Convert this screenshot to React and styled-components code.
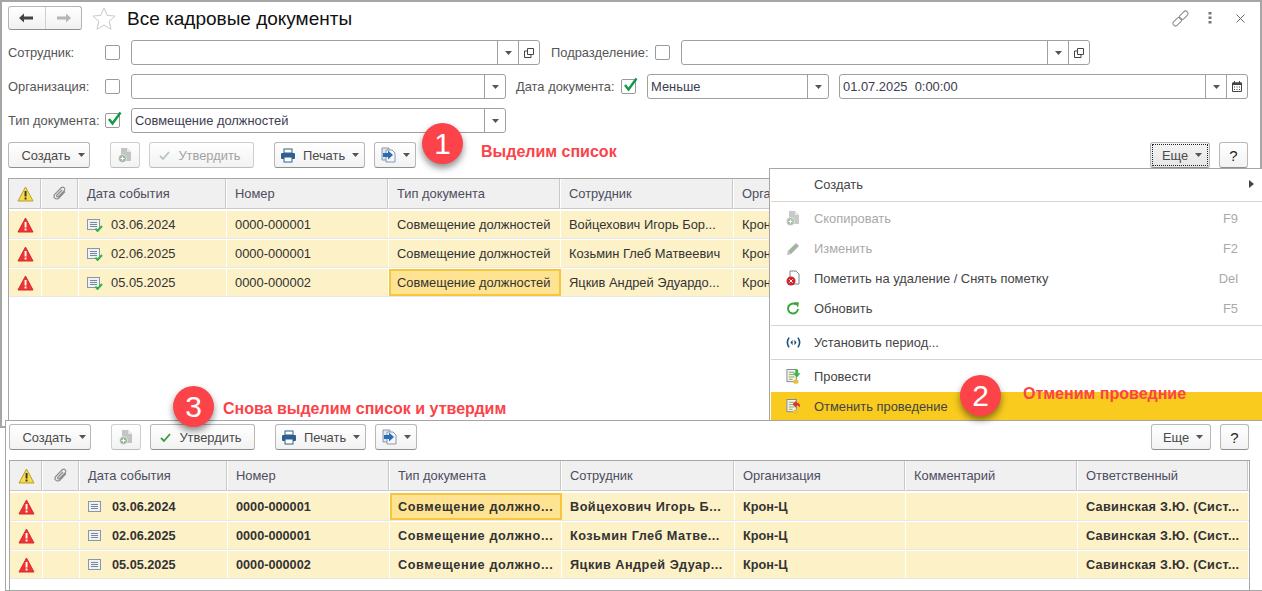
import React from "react";
import styled, { createGlobalStyle } from "styled-components";

const GlobalStyle = createGlobalStyle`
  html, body {
    margin: 0;
    padding: 0;
    background: white;
    font-family: "Liberation Sans", Arial, sans-serif;
    font-size: 12.9px;
    overflow: hidden;
  }
`;

const Page = styled.div`
  position: relative;
  width: 1262px;
  height: 591px;
  overflow: hidden;
  background: white;
`;

const Win = styled.div`
  box-sizing: border-box;
  width: 1262px;
  height: 428px;
  border: 2px solid #a6a6a6;
  padding: 4px 0 0 6px;
  background: white;
`;

const TitleBar = styled.div`
  display: flex;
  align-items: center;
  height: 24px;
  margin-bottom: 10px;
`;

const NavGroup = styled.div`
  display: flex;
  box-sizing: border-box;
  width: 74px;
  height: 24px;
  border: 1px solid #b5b5b5;
  border-bottom-color: #8f8f8f;
  border-radius: 3px;
  background: linear-gradient(#ffffff, #f1f1f1);
`;

const NavBtn = styled.div`
  flex: 1;
  display: flex;
  align-items: center;
  justify-content: center;
  & + & {
    border-left: 1px solid #d0d0d0;
  }
`;

const StarWrap = styled.div`
  display: flex;
  margin: 0 11px 0 10px;
`;

const Title = styled.div`
  padding-top: 1px;
  font-size: 19px;
  color: #111;
`;

const WinTools = styled.div`
  margin-left: auto;
  display: flex;
  align-items: center;
  gap: 19px;
  margin-right: 15px;
`;

const FilterRow = styled.div`
  display: flex;
  align-items: center;
  height: 25px;
  margin-bottom: 9px;
`;

const Label = styled.div`
  width: ${(p) => p.$w}px;
  margin-left: ${(p) => p.$ml || 0}px;
  color: #555;
  white-space: nowrap;
`;

const Check = styled.div`
  position: relative;
  box-sizing: border-box;
  width: 15px;
  height: 15px;
  border: 1px solid #9a9a9a;
  border-radius: 2px;
  margin-right: 11px;
  svg {
    position: absolute;
    left: 0;
    top: -4px;
  }
`;

const Field = styled.div`
  display: flex;
  box-sizing: border-box;
  width: ${(p) => p.$w}px;
  height: 25px;
  margin-left: ${(p) => p.$ml || 0}px;
  border: 1px solid #a0a0a0;
  border-radius: 3px;
  background: white;
`;

const FieldText = styled.div`
  flex: 1;
  padding-left: 3px;
  line-height: 23px;
  color: #3c3c50;
  white-space: pre;
`;

const FieldBtn = styled.div`
  display: flex;
  align-items: center;
  justify-content: center;
  width: 20px;
  border-left: 1px solid #a0a0a0;
`;

const Bar = styled.div`
  display: flex;
  align-items: center;
  height: 26px;
`;

const Btn = styled.div`
  display: flex;
  align-items: center;
  justify-content: center;
  gap: ${(p) => p.$gap || 7}px;
  box-sizing: border-box;
  width: ${(p) => p.$w}px;
  height: 26px;
  margin-left: ${(p) => p.$ml || 0}px;
  padding: 0 ${(p) => p.$pr || 0}px 0 ${(p) => p.$pl || 0}px;
  border: 1px solid ${(p) => (p.$off ? "#cfcfcf" : "#b8b8b8")};
  border-bottom-color: ${(p) => (p.$off ? "#bdbdbd" : "#8f8f8f")};
  border-radius: 3px;
  background: ${(p) =>
    p.$focus ? "linear-gradient(#f4f4f4, #e6e6e6)" : "linear-gradient(#ffffff, #f2f2f2)"};
  color: ${(p) => (p.$off ? "#a3a3a3" : "#4a4a4a")};
  outline: ${(p) => (p.$focus ? "1px dotted #222" : "none")};
  outline-offset: -3px;
`;

const HelpMark = styled.span`
  font-size: 15px;
  color: #222;
`;

const TableBox = styled.div`
  box-sizing: border-box;
  width: ${(p) => p.$w}px;
  height: ${(p) => p.$h}px;
  margin-top: ${(p) => p.$mt}px;
  border: 1px solid #a6a6a6;
  border-bottom: none;
  overflow: hidden;
`;

const COLS = "33px 37px 148px 162px 172px 173px 171px 172px 171px";

const HeadRow = styled.div`
  display: grid;
  grid-template-columns: ${COLS};
  height: 30px;
  margin-bottom: 2px;
`;

const HeadCell = styled.div`
  display: flex;
  align-items: center;
  justify-content: ${(p) => (p.$center ? "center" : "flex-start")};
  padding-left: ${(p) => (p.$center ? 0 : 8)}px;
  background: #f0f0f0;
  border-right: 1px solid white;
  border-bottom: 1px solid #c9c9c9;
  box-shadow: inset -1px 0 0 #c9c9c9;
  color: #4d4d60;
  overflow: hidden;
  white-space: nowrap;
`;

const DataRow = styled.div`
  display: grid;
  grid-template-columns: ${COLS};
  height: 27px;
  border-bottom: 1px solid #e8e8e8;
  margin-bottom: 1px;
`;

const Cell = styled.div`
  display: flex;
  align-items: center;
  box-sizing: border-box;
  gap: 8px;
  justify-content: ${(p) => (p.$center ? "center" : "flex-start")};
  padding-left: ${(p) => (p.$center ? 0 : p.$sel ? 6 : 8)}px;
  background: ${(p) => (p.$sel ? "#fde392" : "#fdf1c7")};
  border: ${(p) => (p.$sel ? "2px solid #f6c63c" : "none")};
  border-right: ${(p) => (p.$sel ? "2px solid #f6c63c" : "1px solid white")};
  color: #333;
  font-size: ${(p) => (p.$bold ? 12.7 : 12.9)}px;
  font-weight: ${(p) => (p.$bold ? 700 : 400)};
  letter-spacing: ${(p) => (p.$bold ? p.$track || 0 : 0)}px;
  white-space: nowrap;
  overflow: hidden;
`;

const Panel = styled.div`
  position: absolute;
  left: 5px;
  top: 420px;
  right: 0;
  height: 171px;
  box-sizing: border-box;
  padding: 3px 0 0 3px;
  background: white;
  border: 1px solid #a6a6a6;
  border-right: 0;
`;

const Menu = styled.div`
  position: absolute;
  left: 769px;
  top: 168px;
  right: 0;
  height: 252px;
  box-sizing: border-box;
  padding-left: 1px;
  background: white;
  border: 1px solid #a6a6a6;
  border-right: 0;
  border-bottom: 0;
`;

const MenuItem = styled.div`
  display: flex;
  align-items: center;
  box-sizing: border-box;
  height: ${(p) => p.$h || 30}px;
  padding: 0 24px ${(p) => (p.$hot ? 0 : 2)}px 15px;
  background: ${(p) => (p.$hot ? "#f9cb1e" : "transparent")};
  color: ${(p) => (p.$off ? "#a9a9a9" : "#444")};
`;

const MenuIcon = styled.div`
  display: flex;
  width: 15px;
  margin-right: 13px;
`;

const Keys = styled.div`
  margin-left: auto;
  color: #a9a9a9;
`;

const SubArrow = styled.div`
  margin-left: auto;
  margin-right: -16px;
  width: 0;
  height: 0;
  border-left: 5px solid #444;
  border-top: 4px solid transparent;
  border-bottom: 4px solid transparent;
`;

const Sep = styled.div`
  height: 1px;
  margin: ${(p) => p.$m || "1px 0 2px"};
  background: #d6d4cb;
`;

const Circle = styled.div`
  position: absolute;
  left: ${(p) => p.$x}px;
  top: ${(p) => p.$y}px;
  display: flex;
  align-items: center;
  justify-content: center;
  width: 41px;
  height: 41px;
  border-radius: 50%;
  background: #fb4349;
  color: white;
  font-size: 30px;
  box-shadow: 0 4px 7px rgba(0, 0, 0, 0.45);
`;

const Note = styled.div`
  position: absolute;
  left: ${(p) => p.$x}px;
  top: ${(p) => p.$y}px;
  color: #fb4349;
  font-size: 16px;
  font-weight: 700;
  white-space: nowrap;
`;

const Caret = ({ color = "#555" }) => (
  <svg width="7" height="4" viewBox="0 0 7 4">
    <path d="M0 0h7L3.5 4z" fill={color} />
  </svg>
);

const Tick = () => (
  <svg width="18" height="18" viewBox="0 0 18 18">
    <path d="M3 9l3.5 4.5L14.5 2.5" fill="none" stroke="#0f9a47" strokeWidth="2.4" />
  </svg>
);

const Warn = ({ yellow }) => (
  <svg width="17" height="16" viewBox="0 0 17 16">
    <path
      d="M8.5 1L16 15H1z"
      fill={yellow ? "#f6dc4a" : "#ee3333"}
      stroke={yellow ? "#b79f2a" : "#d92a2a"}
      strokeLinejoin="round"
    />
    <rect x="7.6" y="5" width="1.9" height="5.5" fill={yellow ? "#333" : "white"} />
    <rect x="7.6" y="11.5" width="1.9" height="2" fill={yellow ? "#333" : "white"} />
  </svg>
);

const Clip = () => (
  <svg width="14" height="15" viewBox="0 0 14 15">
    <path
      d="M12 5.5L6 12c-1.300 1.300-3.200 1.300-4.200.2-1-1-1-2.700.2-4L8 2c1-1 2.400-1 3.200-.2.8.8.800 2.200-.2 3.200L5.500 10.500c-.5.500-1.200.500-1.600.1-.4-.4-.4-1.100.1-1.600L9 4"
      fill="none"
      stroke="#8c8c8c"
      strokeWidth="1.2"
    />
  </svg>
);

const DocIcon = ({ posted }) => (
  <svg width="16" height="14" viewBox="0 0 16 14">
    <rect x="0.5" y="1.500" width="12" height="10" fill="#eef1f5" stroke="#8a97a8" />
    <path d="M3 4.500h7M3 6.500h7M3 8.500h7" stroke="#7d8794" />
    {posted && <path d="M8.500 10.500l2 2.500 4.500-5" fill="none" stroke="#35b14a" strokeWidth="2" />}
  </svg>
);

const CopyIcon = ({ op = 1 }) => (
  <svg width="15" height="16" viewBox="0 0 15 16" style={{ opacity: op }}>
    <path d="M3 1h6l4 4v9H3z" fill="#c4c4c4" />
    <path d="M9 1l4 4H9z" fill="#e6e6e6" />
    <circle cx="4.500" cy="11.500" r="4" fill="#9cb79e" stroke="white" strokeWidth="0.6" />
    <path d="M4.500 9.500v4M2.500 11.500h4" stroke="white" />
  </svg>
);

const PrintIcon = () => (
  <svg width="16" height="15" viewBox="0 0 16 15">
    <rect x="4" y="1" width="8" height="4" fill="white" stroke="#2e5f8e" />
    <rect x="1" y="5" width="14" height="6" rx="1" fill="#2e5f8e" />
    <rect x="4" y="9" width="8" height="5" fill="white" stroke="#2e5f8e" />
  </svg>
);

const SendIcon = () => (
  <svg width="15" height="16" viewBox="0 0 15 16">
    <path d="M1 1h7v12H1z" fill="#dfe8f2" stroke="#8a97a8" />
    <path d="M5 3h6l3 3v9H5z" fill="#f4f7fb" stroke="#8a97a8" />
    <path d="M2 6h5V3.500L12 8l-5 4.500V10H2z" fill="#2a6db5" />
  </svg>
);

const OffTick = () => (
  <svg width="11" height="11" viewBox="0 0 11 11">
    <path d="M1 6l3 3 6-7" fill="none" stroke="#b6c6b6" strokeWidth="1.800" />
  </svg>
);

const OnTick = () => (
  <svg width="11" height="11" viewBox="0 0 11 11">
    <path d="M1 6l3 3 6-7" fill="none" stroke="#3d9a3d" strokeWidth="1.800" />
  </svg>
);

const PencilIcon = () => (
  <svg width="15" height="15" viewBox="0 0 15 15">
    <path d="M1 14l1-4 8-8 3 3-8 8z" fill="#a5b3a3" />
    <path d="M1 14l1-4 3 3z" fill="#c9c9c9" />
  </svg>
);

const DeleteIcon = () => (
  <svg width="15" height="16" viewBox="0 0 15 16">
    <path d="M4 1h6l3 3v10H4z" fill="white" stroke="#7c8794" />
    <circle cx="5" cy="11" r="4.500" fill="#d0262b" />
    <path d="M3.300 9.300l3.400 3.400M6.700 9.300l-3.400 3.400" stroke="white" />
  </svg>
);

const RefreshIcon = () => (
  <svg width="15" height="15" viewBox="0 0 15 15">
    <path d="M12 8a5 5 0 1 1-2-4.500" fill="none" stroke="#3aa53a" strokeWidth="2" />
    <path d="M8 1l5 .5-1 5z" fill="#3aa53a" />
  </svg>
);

const PeriodIcon = () => (
  <svg width="17" height="13" viewBox="0 0 17 13">
    <path d="M3.500 1C1 4.500 1 8.500 3.500 12M13.500 1c2.500 3.500 2.500 7.500 0 11" fill="none" stroke="#1f4f7a" strokeWidth="1.800" />
    <path d="M7.500 3.500v6L5 6.500zM9.500 3.500v6L12 6.500z" fill="#1f4f7a" />
  </svg>
);

const PostIcon = ({ undo }) => (
  <svg width="16" height="17" viewBox="0 0 16 17">
    <rect x="1" y="1" width="10" height="13" fill="#f3f6ea" stroke="#7c8794" />
    <path d="M3 4h6M3 6.500h6M3 9h6M3 11.500h4" stroke="#88a060" />
    <ellipse cx="10.500" cy="14" rx="3" ry="2.200" fill="#e8c23c" />
    {undo ? (
      <path d="M7 6l4-4v2.500c3 0 4.500 2 4 5-1-1.500-2-2-4-2V10z" fill="#d83232" />
    ) : (
      <path d="M10 1h3v4h2.500L11.500 9.500 7.500 5H10z" fill="#3eb24a" />
    )}
  </svg>
);

const CopyFrames = () => (
  <svg width="10" height="10" viewBox="0 0 10 10">
    <path d="M3.500.500h6v6h-6zM3 3H.5v6.500H7V7" fill="none" stroke="#444" />
  </svg>
);

const LinkIcon = () => (
  <svg width="17" height="17" viewBox="0 0 17 17">
    <g fill="none" stroke="#8a8a8a" transform="rotate(-45 8.500 8.500)">
      <rect x="-1" y="6" width="10" height="5" rx="2.500" />
      <rect x="8" y="6" width="10" height="5" rx="2.500" />
    </g>
  </svg>
);

const Toolbar = ({ approve, focus }) => (
  <Bar>
    <Btn $w={82} $gap={7} $pl={8}>
      Создать <Caret />
    </Btn>
    <Btn $w={30} $ml={20} $off>
      <CopyIcon />
    </Btn>
    <Btn $w={105} $ml={9} $off={!approve} $gap={8} $pr={3}>
      {approve ? <OnTick /> : <OffTick />}
      Утвердить
    </Btn>
    <Btn $w={91} $ml={20}>
      <PrintIcon /> Печать <Caret />
    </Btn>
    <Btn $w={42} $ml={9}>
      <SendIcon /> <Caret />
    </Btn>
    <Btn $w={60} $ml={734} $focus={focus} $gap={7} $pl={4}>
      Еще <Caret />
    </Btn>
    <Btn $w={29} $ml={9}>
      <HelpMark>?</HelpMark>
    </Btn>
  </Bar>
);

const heads = ["Дата события", "Номер", "Тип документа", "Сотрудник", "Организация", "Комментарий", "Ответственный"];

const DocTable = ({ rows, bold, selected, h, w, mt, full }) => (
  <TableBox $h={h} $w={w} $mt={mt}>
    <HeadRow>
      <HeadCell $center>
        <Warn yellow />
      </HeadCell>
      <HeadCell $center>
        <Clip />
      </HeadCell>
      {heads.slice(0, full ? 7 : 5).map((t) => (
        <HeadCell key={t}>{t}</HeadCell>
      ))}
    </HeadRow>
    {rows.map((r, i) => (
      <DataRow key={r.date}>
        <Cell $center>
          <Warn />
        </Cell>
        <Cell />
        <Cell $bold={bold}>
          <DocIcon posted={!bold} />
          {r.date}
        </Cell>
        <Cell $bold={bold}>{r.num}</Cell>
        <Cell $bold={bold} $sel={i === selected} $track={0.6}>
          {r.type}
        </Cell>
        <Cell $bold={bold} $track={0.48}>
          {r.person}
        </Cell>
        <Cell $bold={bold}>Крон-Ц</Cell>
        {full && <Cell />}
        {full && (
          <Cell $bold={bold} $track={0.3}>
            Савинская З.Ю. (Сист...
          </Cell>
        )}
      </DataRow>
    ))}
  </TableBox>
);

const topRows = [
  { date: "03.06.2024", num: "0000-000001", type: "Совмещение должностей", person: "Войцехович Игорь Бор..." },
  { date: "02.06.2025", num: "0000-000001", type: "Совмещение должностей", person: "Козьмин Глеб Матвеевич" },
  { date: "05.05.2025", num: "0000-000002", type: "Совмещение должностей", person: "Яцкив Андрей Эдуардо..." },
];

const bottomRows = [
  { date: "03.06.2024", num: "0000-000001", type: "Совмещение должно...", person: "Войцехович Игорь Б..." },
  { date: "02.06.2025", num: "0000-000001", type: "Совмещение должно...", person: "Козьмин Глеб Матве..." },
  { date: "05.05.2025", num: "0000-000002", type: "Совмещение должно...", person: "Яцкив Андрей Эдуар..." },
];

const App = () => (
  <Page>
    <GlobalStyle />
    <Win>
      <TitleBar>
        <NavGroup>
          <NavBtn>
            <svg width="15" height="10" viewBox="0 0 15 10">
              <path d="M0 5l5-4.500V3.500h9v3H5v3z" fill="#444" />
            </svg>
          </NavBtn>
          <NavBtn>
            <svg width="15" height="10" viewBox="0 0 15 10">
              <path d="M15 5L10 .5V3.500H1v3h9v3z" fill="#b5b5b5" />
            </svg>
          </NavBtn>
        </NavGroup>
        <StarWrap>
          <svg width="24" height="23" viewBox="0 0 24 23">
            <path d="M12 1l3.200 7.400 8 .7-6 5.300 1.800 7.900L12 18.100 5 22.300l1.800-7.900-6-5.300 8-.7z" fill="white" stroke="#c9c9c9" />
          </svg>
        </StarWrap>
        <Title>Все кадровые документы</Title>
        <WinTools>
          <LinkIcon />
          <svg width="4" height="12" viewBox="0 0 4 12">
            <path d="M.5 0h3v2.500h-3zM.5 4.500h3V7h-3zM.5 9h3v2.500h-3z" fill="#777" />
          </svg>
          <svg width="9" height="9" viewBox="0 0 9 9" style={{ marginLeft: 5 }}>
            <path d="M.5.500l8 8M8.500.500l-8 8" stroke="#666" />
          </svg>
        </WinTools>
      </TitleBar>
      <FilterRow>
        <Label $w={97}>Сотрудник:</Label>
        <Check />
        <Field $w={409}>
          <FieldText />
          <FieldBtn>
            <Caret />
          </FieldBtn>
          <FieldBtn>
            <CopyFrames />
          </FieldBtn>
        </Field>
        <Label $w={104} $ml={11}>
          Подразделение:
        </Label>
        <Check />
        <Field $w={409}>
          <FieldText />
          <FieldBtn>
            <Caret />
          </FieldBtn>
          <FieldBtn>
            <CopyFrames />
          </FieldBtn>
        </Field>
      </FilterRow>
      <FilterRow>
        <Label $w={97}>Организация:</Label>
        <Check />
        <Field $w={375}>
          <FieldText />
          <FieldBtn>
            <Caret />
          </FieldBtn>
        </Field>
        <Label $w={105} $ml={10}>
          Дата документа:
        </Label>
        <Check>
          <Tick />
        </Check>
        <Field $w={182}>
          <FieldText>Меньше</FieldText>
          <FieldBtn>
            <Caret />
          </FieldBtn>
        </Field>
        <Field $w={409} $ml={10}>
          <FieldText>01.07.2025  0:00:00</FieldText>
          <FieldBtn>
            <Caret />
          </FieldBtn>
          <FieldBtn>
            <svg width="10" height="11" viewBox="0 0 10 11">
              <path d="M.5 2h9v8.500h-9z" fill="none" stroke="#444" />
              <path d="M.5 1.500h9V4h-9zM2 0h1v2H2zM7 0h1v2H7z" fill="#444" />
              <path d="M2 5.500h1v1H2zM4.500 5.500h1v1h-1zM7 5.500h1v1H7zM2 8h1v1H2zM4.500 8h1v1h-1zM7 8h1v1H7z" fill="#444" />
            </svg>
          </FieldBtn>
        </Field>
      </FilterRow>
      <FilterRow>
        <Label $w={97}>Тип документа:</Label>
        <Check>
          <Tick />
        </Check>
        <Field $w={375}>
          <FieldText>Совмещение должностей</FieldText>
          <FieldBtn>
            <Caret />
          </FieldBtn>
        </Field>
      </FilterRow>
      <Toolbar focus />
      <DocTable rows={topRows} selected={2} h={260} w={1240} mt={10} />
    </Win>

    <Menu>
      <MenuItem $h={32}>
        <MenuIcon />
        Создать
        <SubArrow />
      </MenuItem>
      <Sep $m="0 0 2px" />
      <MenuItem $off>
        <MenuIcon>
          <CopyIcon op={0.9} />
        </MenuIcon>
        Скопировать
        <Keys>F9</Keys>
      </MenuItem>
      <MenuItem $off>
        <MenuIcon>
          <PencilIcon />
        </MenuIcon>
        Изменить
        <Keys>F2</Keys>
      </MenuItem>
      <MenuItem>
        <MenuIcon>
          <DeleteIcon />
        </MenuIcon>
        Пометить на удаление / Снять пометку
        <Keys>Del</Keys>
      </MenuItem>
      <MenuItem>
        <MenuIcon>
          <RefreshIcon />
        </MenuIcon>
        Обновить
        <Keys>F5</Keys>
      </MenuItem>
      <Sep />
      <MenuItem>
        <MenuIcon>
          <PeriodIcon />
        </MenuIcon>
        Установить период...
      </MenuItem>
      <Sep />
      <MenuItem>
        <MenuIcon>
          <PostIcon />
        </MenuIcon>
        Провести
      </MenuItem>
      <MenuItem $hot $h={28}>
        <MenuIcon>
          <PostIcon undo />
        </MenuIcon>
        Отменить проведение
      </MenuItem>
    </Menu>

    <Panel>
      <Toolbar approve />
      <DocTable rows={bottomRows} bold selected={0} h={132} w={1241} mt={10} full />
    </Panel>

    <Circle $x={422} $y={123}>1</Circle>
    <Note $x={481} $y={143}>Выделим список</Note>
    <Circle $x={960} $y={375}>2</Circle>
    <Note $x={1023} $y={385}>Отменим проведние</Note>
    <Circle $x={173} $y={386}>3</Circle>
    <Note $x={223} $y={400}>Снова выделим список и утвердим</Note>
  </Page>
);

export default App;
